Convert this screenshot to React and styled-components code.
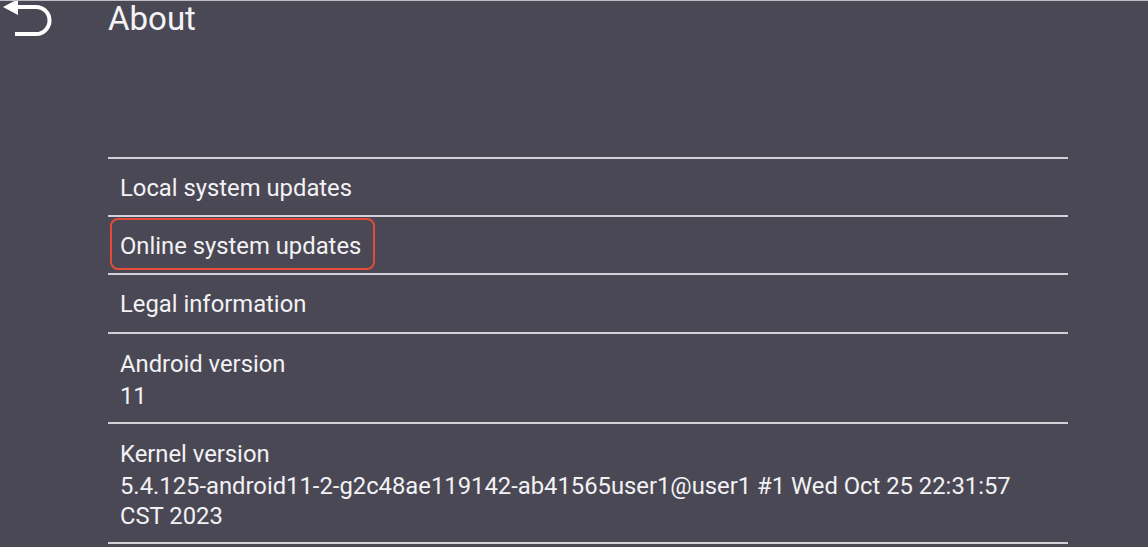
import React from "react";
import styled, { createGlobalStyle } from "styled-components";

const Global = createGlobalStyle`
  html, body { margin: 0; padding: 0; background: #4b4855; }
  body { font-family: Roboto, "Noto Sans", sans-serif; color: #f2f2f4; }
`;

const Page = styled.div`
  width: 1148px;
  height: 547px;
  overflow: hidden;
  background: #4b4855;
  border-top: 1px solid #bdbcc2;
  box-sizing: border-box;
`;

const Header = styled.header`
  display: flex;
  align-items: center;
  height: 38px;
`;

const BackButton = styled.div`
  width: 108px;
  height: 38px;
  display: flex;
  align-items: flex-start;
  svg { display: block; }
`;

const Title = styled.h1`
  margin: 0;
  font-size: 33px;
  font-weight: 400;
  line-height: 38px;
  color: #f4f4f6;
  margin-top: -2px;
`;

const List = styled.div`
  margin: 118px 0 0 108px;
  width: 960px;
`;

const Row = styled.div`
  border-top: 2px solid #d2d1d8;
  padding: ${(p) => (p.$multi ? "14px 12px 10px 12px" : "0 12px")};
  height: ${(p) => (p.$multi ? "auto" : p.$tall ? "57px" : "56px")};
  display: flex;
  flex-direction: column;
  justify-content: center;
  position: relative;
  &:last-child { border-bottom: 2px solid #d2d1d8; }
`;

const Label = styled.div`
  font-size: 23.8px;
  line-height: 33px;
  color: #f2f2f4;
  padding-top: ${(p) => (p.$single ? "2px" : "0")};
`;

const Value = styled.div`
  font-size: 23.8px;
  line-height: 30.5px;
  color: #f2f2f4;
  max-width: 905px;
`;

const Highlight = styled.span`
  position: absolute;
  left: 2px;
  top: 1px;
  width: 265px;
  height: 52px;
  box-sizing: border-box;
  border: 2px solid #e24c38;
  border-radius: 8px;
  pointer-events: none;
`;

const BackIcon = () => (
  <svg width="56" height="38" viewBox="0 0 56 38">
    <polygon points="3,6 18,-2 18,14" fill="#ffffff" />
    <path
      d="M14 6 H36 A13.5 13.5 0 0 1 36 33 H15"
      fill="none"
      stroke="#ffffff"
      strokeWidth="4"
    />
  </svg>
);

export default function App() {
  return (
    <Page>
      <Global />
      <Header>
        <BackButton>
          <BackIcon />
        </BackButton>
        <Title>About</Title>
      </Header>
      <List>
        <Row>
          <Label $single>Local system updates</Label>
        </Row>
        <Row>
          <Highlight />
          <Label $single>Online system updates</Label>
        </Row>
        <Row $tall>
          <Label $single>Legal information</Label>
        </Row>
        <Row $multi>
          <Label>Android version</Label>
          <Value>11</Value>
        </Row>
        <Row $multi>
          <Label>Kernel version</Label>
          <Value>5.4.125-android11-2-g2c48ae119142-ab41565user1@user1 #1 Wed Oct 25 22:31:57 CST 2023</Value>
        </Row>
      </List>
    </Page>
  );
}
